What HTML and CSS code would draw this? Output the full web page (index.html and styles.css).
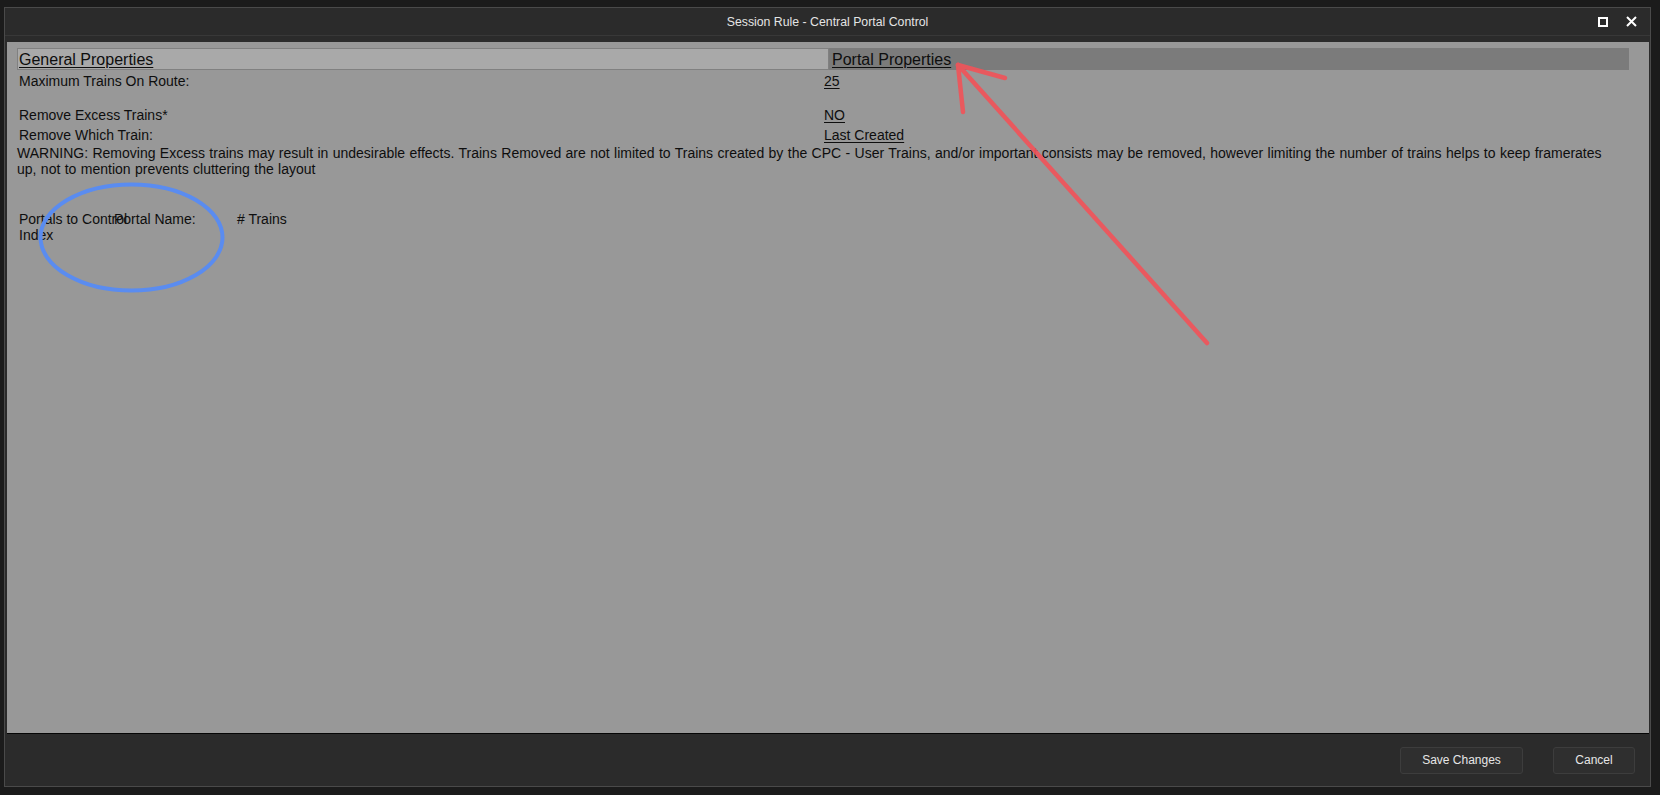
FILE: index.html
```html
<!DOCTYPE html>
<html lang="en">
<head>
<meta charset="utf-8">
<title>Session Rule - Central Portal Control</title>
<link rel="stylesheet" href="styles.css">
</head>
<body>
  <div class="window">
    <div class="titlebar">
      <span class="spacer-col"></span>
      <span class="title">Session Rule - Central Portal Control</span>
      <div class="controls">
        <svg class="icon" width="10" height="10" viewBox="0 0 10 10" aria-label="Maximize"><rect x="1" y="1" width="8" height="8" fill="none" stroke="#ffffff" stroke-width="2"/></svg>
        <svg class="icon" width="11" height="11" viewBox="0 0 11 11" aria-label="Close"><path d="M1 1 L10 10 M10 1 L1 10" stroke="#ffffff" stroke-width="2" fill="none"/></svg>
      </div>
    </div>
    <div class="content">
      <div class="tabs">
        <div class="tab tab-general"><span class="link">General Properties</span></div>
        <div class="tab tab-portal"><span class="link">Portal Properties</span></div>
      </div>
      <div class="props">
        <div class="label">Maximum Trains On Route:</div>
        <div class="value"><span class="link">25</span></div>
        <div class="gap-row"></div>
        <div class="label">Remove Excess Trains*</div>
        <div class="value"><span class="link">NO</span></div>
        <div class="label">Remove Which Train:</div>
        <div class="value"><span class="link">Last Created</span></div>
      </div>
      <p class="warning">WARNING: Removing Excess trains may result in undesirable effects. Trains Removed are not limited to Trains created by the CPC - User Trains, and/or important consists may be removed, however limiting the number of trains helps to keep framerates up, not to mention prevents cluttering the layout</p>
      <div class="portal-table">
        <div class="col col-index"><div class="nowrap">Portals to Control</div><div>Index</div></div>
        <div class="col col-name">Portal Name:</div>
        <div class="col col-trains"># Trains</div>
      </div>
    </div>
    <div class="footer">
      <button class="btn btn-save">Save Changes</button>
      <button class="btn btn-cancel">Cancel</button>
    </div>
  </div>
  <svg class="annotations" width="1660" height="795" viewBox="0 0 1660 795" aria-hidden="true">
    <ellipse cx="131.5" cy="237.5" rx="91" ry="53" fill="none" stroke="#5a8cf0" stroke-width="4"/>
    <g stroke="#f0545a" stroke-width="4.5" stroke-linecap="round" fill="none" opacity="0.92">
      <path d="M958 65 L1207 343"/>
      <path d="M958 65 L1005 78"/>
      <path d="M958 65 L963 112"/>
    </g>
  </svg>
</body>
</html>
```
FILE: styles.css
```css
html, body {
  margin: 0;
  padding: 0;
}
body {
  position: relative;
  width: 1660px;
  height: 795px;
  background: #1b1b1b;
  overflow: hidden;
  font-family: "Liberation Sans", Arial, sans-serif;
  box-sizing: border-box;
  padding: 7px 9px 8px 4px;
}
.window {
  width: 1647px;
  height: 780px;
  box-sizing: border-box;
  border: 1px solid #4a4a4a;
  background: #2b2b2b;
  display: flex;
  flex-direction: column;
}
.titlebar {
  height: 27px;
  flex: 0 0 27px;
  display: grid;
  grid-template-columns: 1fr auto 1fr;
  align-items: center;
  border-bottom: 1px solid #383838;
  background: #2b2b2b;
  margin-bottom: 6px;
}
.title {
  color: #e4e4e4;
  font-size: 12.3px;
  line-height: 14px;
}
.controls {
  justify-self: end;
  display: flex;
  align-items: center;
  gap: 18px;
  padding-right: 13px;
}
.icon {
  display: block;
}
.content {
  flex: 0 0 692px;
  height: 692px;
  box-sizing: border-box;
  margin: 0 1px 0 2px;
  background: #989898;
  border-bottom: 1px solid #050505;
  padding: 6px 20px 0 10px;
  color: #0e0e0e;
  font-size: 14px;
}
.tabs {
  display: flex;
  height: 22px;
}
.tab {
  box-sizing: border-box;
  height: 22px;
  font-size: 16px;
  line-height: 20px;
  color: #0e0e0e;
}
.tab-general {
  width: 812px;
  background: #a9a9a9;
  border: 1px solid #808080;
  padding-left: 1px;
  padding-top: 1px;
}
.tab-portal {
  flex: 1;
  background: #7b7b7b;
  padding-left: 3px;
  padding-top: 2px;
}
.link {
  text-decoration: underline;
  text-underline-offset: 2px;
}
.props {
  display: grid;
  grid-template-columns: 805px 1fr;
  row-gap: 2px;
  margin: 2px 0 0 2px;
  line-height: 18px;
}
.gap-row {
  grid-column: 1 / -1;
  height: 12px;
}
.warning {
  margin: 1px 0 0 0;
  width: 1596px;
  line-height: 16px;
  word-spacing: 0.5px;
}
.portal-table {
  display: grid;
  grid-template-columns: 95px 123px auto;
  margin: 34px 0 0 2px;
  line-height: 16px;
}
.nowrap {
  white-space: nowrap;
}
.footer {
  flex: 1;
  display: flex;
  align-items: center;
  justify-content: flex-end;
  gap: 30px;
  padding-right: 15px;
}
.btn {
  height: 27px;
  box-sizing: border-box;
  background: #2f2f2f;
  border: 1px solid #3d3d3d;
  border-radius: 3px;
  color: #e6e6e6;
  font-family: "Liberation Sans", Arial, sans-serif;
  font-size: 12px;
  padding: 0;
}
.btn-save {
  width: 123px;
}
.btn-cancel {
  width: 82px;
}
.annotations {
  position: absolute;
  left: 0;
  top: 0;
  pointer-events: none;
}
```
